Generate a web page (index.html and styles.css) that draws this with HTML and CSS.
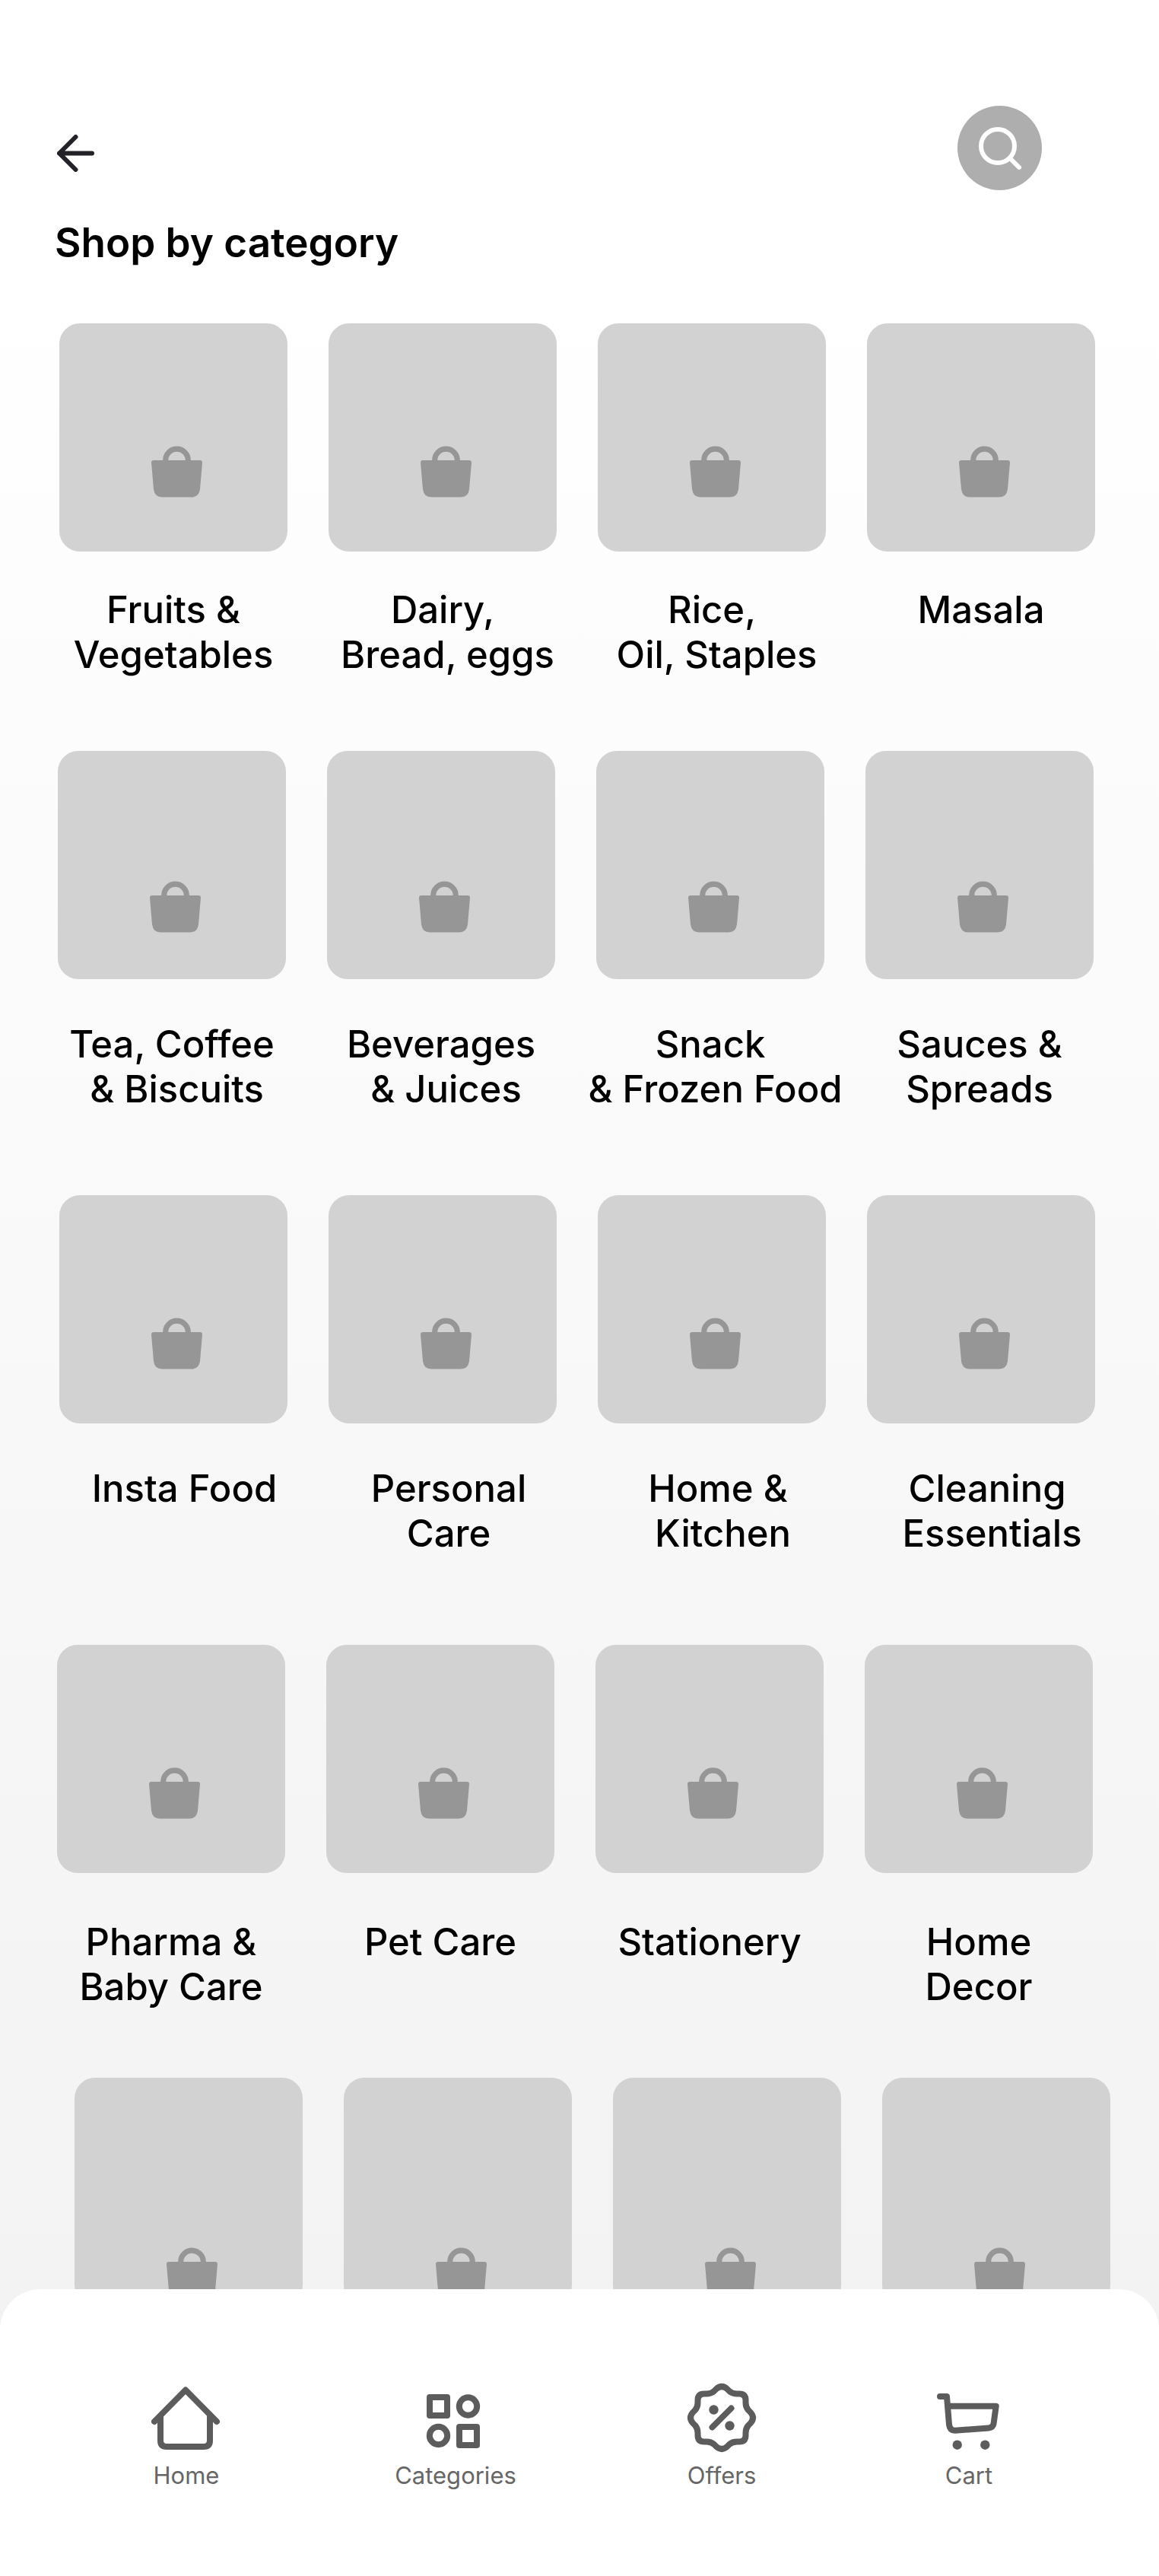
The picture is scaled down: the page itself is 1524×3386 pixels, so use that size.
FILE: index.html
```html
<!DOCTYPE html>
<html lang="en">
<head>
  <meta charset="UTF-8">
  <meta name="viewport" content="width=device-width, initial-scale=1.0">
  <title>Shop by category</title>
  <link rel="stylesheet" href="styles.css">
</head>
<body>

  <!-- Shared bag icon -->
  <svg class="sprite" aria-hidden="true">
    <symbol id="bag" viewBox="0 0 67 68">
      <path d="M18.7 21v-2a14.8 14.8 0 0 1 29.6 0v2" fill="none" stroke="#969696" stroke-width="7.2"/>
      <path d="M3 19H64Q67 19 67 22L64 57Q62.5 67.5 53 67.5H14Q4.5 67.5 3 57L0 22Q0 19 3 19Z" fill="#969696"/>
    </symbol>
  </svg>

  <header class="topbar">
    <button class="back" type="button" aria-label="Back">
      <svg width="49" height="49" viewBox="0 0 49 49" fill="none" stroke="#232228" stroke-width="6" stroke-linecap="round" stroke-linejoin="round">
        <path d="M46 24.5H3M24.5 3L3 24.5L24.5 46"/>
      </svg>
    </button>
    <button class="search" type="button" aria-label="Search">
      <svg width="111" height="111" viewBox="0 0 111 111" fill="none" stroke="#fff" stroke-width="6" stroke-linecap="round">
        <circle cx="53" cy="53" r="22"/>
        <path d="M69 69L81 81"/>
      </svg>
    </button>
  </header>

  <main>
    <h1>Shop by category</h1>

    <div class="row row-1">
      <a class="category" href="#">
        <span class="tile"><svg class="bag"><use href="#bag"/></svg></span>
        <span class="label">Fruits &amp;<br>Vegetables</span>
      </a>
      <a class="category" href="#">
        <span class="tile"><svg class="bag"><use href="#bag"/></svg></span>
        <span class="label">Dairy,<br>&nbsp;Bread, eggs</span>
      </a>
      <a class="category" href="#">
        <span class="tile"><svg class="bag"><use href="#bag"/></svg></span>
        <span class="label">Rice,<br>&nbsp;Oil, Staples</span>
      </a>
      <a class="category" href="#">
        <span class="tile"><svg class="bag"><use href="#bag"/></svg></span>
        <span class="label">Masala</span>
      </a>
    </div>

    <div class="row row-2">
      <a class="category" href="#">
        <span class="tile"><svg class="bag"><use href="#bag"/></svg></span>
        <span class="label">Tea, Coffee<br>&nbsp;&amp; Biscuits</span>
      </a>
      <a class="category" href="#">
        <span class="tile"><svg class="bag"><use href="#bag"/></svg></span>
        <span class="label">Beverages<br>&nbsp;&amp; Juices</span>
      </a>
      <a class="category" href="#">
        <span class="tile"><svg class="bag"><use href="#bag"/></svg></span>
        <span class="label">Snack<br>&nbsp;&amp; Frozen Food</span>
      </a>
      <a class="category" href="#">
        <span class="tile"><svg class="bag"><use href="#bag"/></svg></span>
        <span class="label">Sauces &amp;<br>Spreads</span>
      </a>
    </div>

    <div class="row row-3">
      <a class="category" href="#">
        <span class="tile"><svg class="bag"><use href="#bag"/></svg></span>
        <span class="label">&nbsp;Insta Food</span>
      </a>
      <a class="category" href="#">
        <span class="tile"><svg class="bag"><use href="#bag"/></svg></span>
        <span class="label">Personal<br>Care</span>
      </a>
      <a class="category" href="#">
        <span class="tile"><svg class="bag"><use href="#bag"/></svg></span>
        <span class="label">Home &amp;<br>&nbsp;Kitchen</span>
      </a>
      <a class="category" href="#">
        <span class="tile"><svg class="bag"><use href="#bag"/></svg></span>
        <span class="label">Cleaning<br>&nbsp;Essentials</span>
      </a>
    </div>

    <div class="row row-4">
      <a class="category" href="#">
        <span class="tile"><svg class="bag"><use href="#bag"/></svg></span>
        <span class="label">Pharma &amp;<br>Baby Care</span>
      </a>
      <a class="category" href="#">
        <span class="tile"><svg class="bag"><use href="#bag"/></svg></span>
        <span class="label">Pet Care</span>
      </a>
      <a class="category" href="#">
        <span class="tile"><svg class="bag"><use href="#bag"/></svg></span>
        <span class="label">Stationery</span>
      </a>
      <a class="category" href="#">
        <span class="tile"><svg class="bag"><use href="#bag"/></svg></span>
        <span class="label">Home<br>Decor</span>
      </a>
    </div>

    <!-- Next row, partly behind the bottom bar -->
    <div class="row row-5">
      <span class="tile"><svg class="bag"><use href="#bag"/></svg></span>
      <span class="tile"><svg class="bag"><use href="#bag"/></svg></span>
      <span class="tile"><svg class="bag"><use href="#bag"/></svg></span>
      <span class="tile"><svg class="bag"><use href="#bag"/></svg></span>
    </div>
  </main>

  <nav class="bottom-nav">
    <a href="#">
      <svg class="nav-icon" viewBox="0 0 92 92">
        <path d="M4 51L45 9.5L86 51"/>
        <path d="M12 45V76Q12 84 20 84H69Q77 84 77 76V45"/>
      </svg>
      <span>Home</span>
    </a>
    <a href="#">
      <svg class="nav-icon" viewBox="0 0 92 92">
        <rect x="12" y="19" width="23" height="24"/>
        <circle cx="62.5" cy="31" r="11.7"/>
        <circle cx="23.500" cy="69.5" r="11.7"/>
        <rect x="51" y="58" width="23" height="24"/>
      </svg>
      <span>Categories</span>
    </a>
    <a href="#">
      <svg class="nav-icon" viewBox="-46 -46 92 92">
        <path d="M-7 -38Q0 -44 7 -38L10 -35Q14 -31.5 20 -31.5H23Q31.5 -31.5 31.5 -23V-20Q31.5 -14 35 -10L38 -7Q44 0 38 7L35 10Q31.5 14 31.5 20V23Q31.5 31.5 23 31.5H20Q14 31.5 10 35L7 38Q0 44 -7 38L-10 35Q-14 31.5 -20 31.5H-23Q-31.5 31.5 -31.5 23V20Q-31.5 14 -35 10L-38 7Q-44 0 -38 -7L-35 -10Q-31.5 -14 -31.5 -20V-23Q-31.5 -31.5 -23 -31.5H-20Q-14 -31.5 -10 -35Z"/>
        <path d="M-12.5 12.5L12.5 -12.5"/>
        <circle class="dot" cx="-10.5" cy="-10.5" r="6.2"/>
        <circle class="dot" cx="10.5" cy="10.5" r="6.2"/>
      </svg>
      <span>Offers</span>
    </a>
    <a href="#">
      <svg class="nav-icon" viewBox="0 0 92 92">
        <path d="M8 18H17L20 55Q21 63 28 62.7L72 59.5Q77.5 59 78.5 54L81.7 30.7H18"/>
        <circle class="dot" cx="30.7" cy="81.7" r="6.2"/>
        <circle class="dot" cx="67.3" cy="81.7" r="6.2"/>
      </svg>
      <span>Cart</span>
    </a>
  </nav>

</body>
</html>
```
FILE: styles.css
```css
* {
  box-sizing: border-box;
}

body {
  font-family: Inter, "Liberation Sans", sans-serif;
  background: linear-gradient(#fff 10%, #f1f1f1 100%);
  color: #000;
  margin: 0;
  min-height: 100vh;
}

a {
  color: inherit;
  text-decoration: none;
}

button {
  padding: 0;
  border: none;
  background: none;
  cursor: pointer;
}

button svg {
  display: block;
}

.sprite {
  display: none;
}

/* Header */
.topbar {
  display: flex;
  justify-content: space-between;
  align-items: center;
  padding: 139px 154px 0 75px;
}

.back {
  padding-top: 14px;
}

.search {
  background-color: #aeaeae;
  border-radius: 50%;
}

h1 {
  margin: 38px 72px 75px;
  font-size: 53px;
  font-weight: 600;
  line-height: 62px;
}

/* Categories */
.row {
  display: grid;
  grid-template-columns: repeat(4, minmax(0, 1fr));
  gap: 54px;
}

.category {
  display: flex;
  flex-direction: column;
  align-items: center;
}

.tile {
  display: flex;
  justify-content: center;
  width: 100%;
  aspect-ratio: 1;
  padding: 161px 0 0 8px;
  background-color: #d2d2d2;
  border-radius: 27px;
}

.bag {
  width: 67px;
  height: 68px;
}

.label {
  font-size: 49px;
  font-weight: 500;
  line-height: 59px;
  text-align: center;
  white-space: nowrap;
}

.row-1 {
  padding: 0 84px 97px 78px;
}

.row-2 {
  padding: 0 86px 110px 76px;
}

.row-3 {
  padding: 0 84px 117px 78px;
}

.row-4 {
  padding: 0 87px 90px 75px;
}

.row-5 {
  padding: 0 64px 0 98px;
}

.row-1 .label {
  margin-top: 47px;
}

.row-2 .label,
.row-3 .label {
  margin-top: 56px;
}

.row-3 .label {
  padding-left: 16px;
}

.row-4 .label {
  margin-top: 61px;
}

.row-2 .tile {
  padding-top: 171px;
}

.row-5 .tile {
  padding-top: 223px;
}

/* Bottom bar */
.bottom-nav {
  position: fixed;
  left: 0;
  right: 0;
  bottom: 0;
  display: grid;
  grid-template-columns: 354fr 354fr 346fr 304fr;
  padding: 123px 98px 114px 68px;
  background-color: #fff;
  border-radius: 53px 53px 0 0;
}

.bottom-nav a {
  display: flex;
  flex-direction: column;
  align-items: center;
  gap: 12px;
  color: #666;
  font-size: 31px;
  line-height: 36px;
}

.nav-icon {
  width: 92px;
  height: 92px;
  fill: none;
  stroke: #5c5c5c;
  stroke-width: 8;
  stroke-linecap: round;
  stroke-linejoin: round;
}

.nav-icon .dot {
  fill: #5c5c5c;
  stroke: none;
}
```
